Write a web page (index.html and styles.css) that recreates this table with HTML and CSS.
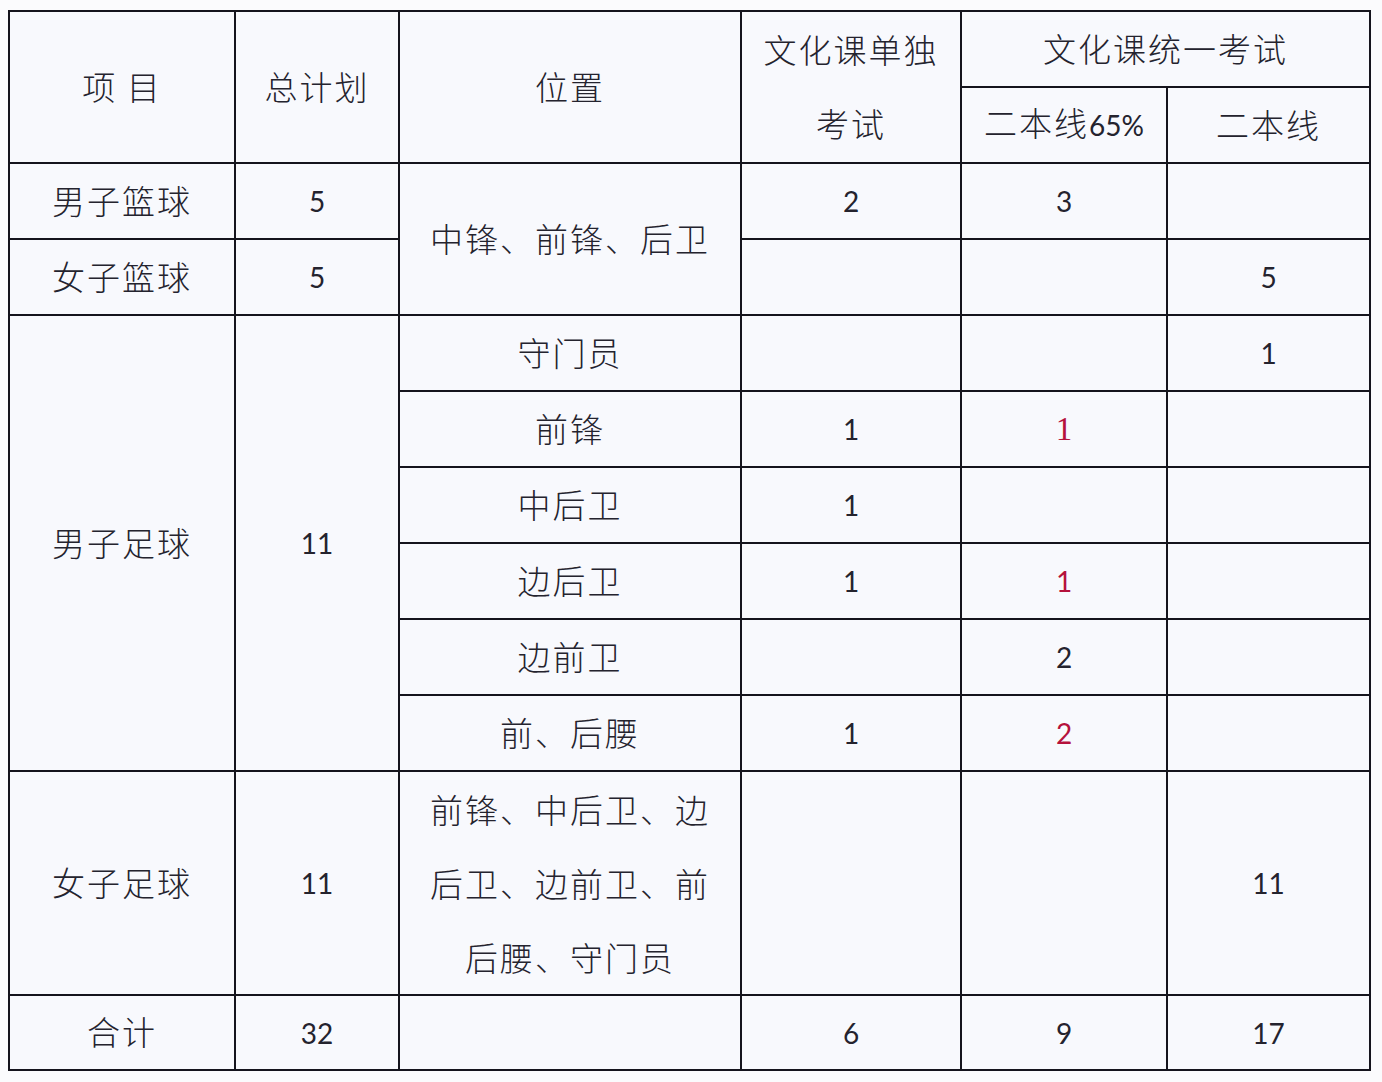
FILE: index.html
```html
<!DOCTYPE html>
<html lang="zh">
<head>
<meta charset="utf-8">
<title>招生计划</title>
<link rel="stylesheet" href="styles.css">
</head>
<body>
<table class="plan">
  <colgroup>
    <col class="c1"><col class="c2"><col class="c3"><col class="c4"><col class="c5"><col class="c6">
  </colgroup>
  <tr class="r">
    <td rowspan="2">项 目</td>
    <td rowspan="2">总计划</td>
    <td rowspan="2">位置</td>
    <td rowspan="2" class="ml">文化课单独<br>考试</td>
    <td colspan="2">文化课统一考试</td>
  </tr>
  <tr class="r">
    <td>二本线<span class="n">65%</span></td>
    <td>二本线</td>
  </tr>
  <tr class="r">
    <td>男子篮球</td>
    <td><span class="n">5</span></td>
    <td rowspan="2">中锋、前锋、后卫</td>
    <td><span class="n">2</span></td>
    <td><span class="n">3</span></td>
    <td></td>
  </tr>
  <tr class="r">
    <td>女子篮球</td>
    <td><span class="n">5</span></td>
    <td></td>
    <td></td>
    <td><span class="n">5</span></td>
  </tr>
  <tr class="r">
    <td rowspan="6">男子足球</td>
    <td rowspan="6"><span class="n">11</span></td>
    <td>守门员</td>
    <td></td>
    <td></td>
    <td><span class="n">1</span></td>
  </tr>
  <tr class="r">
    <td>前锋</td>
    <td><span class="n">1</span></td>
    <td><span class="n red serif">1</span></td>
    <td></td>
  </tr>
  <tr class="r">
    <td>中后卫</td>
    <td><span class="n">1</span></td>
    <td></td>
    <td></td>
  </tr>
  <tr class="r">
    <td>边后卫</td>
    <td><span class="n">1</span></td>
    <td><span class="n red">1</span></td>
    <td></td>
  </tr>
  <tr class="r">
    <td>边前卫</td>
    <td></td>
    <td><span class="n">2</span></td>
    <td></td>
  </tr>
  <tr class="r">
    <td>前、后腰</td>
    <td><span class="n">1</span></td>
    <td><span class="n red">2</span></td>
    <td></td>
  </tr>
  <tr class="rt">
    <td>女子足球</td>
    <td><span class="n">11</span></td>
    <td class="ml tall">前锋、中后卫、边<br>后卫、边前卫、前<br>后腰、守门员</td>
    <td></td>
    <td></td>
    <td><span class="n">11</span></td>
  </tr>
  <tr class="rl">
    <td>合计</td>
    <td><span class="n">32</span></td>
    <td></td>
    <td><span class="n">6</span></td>
    <td><span class="n">9</span></td>
    <td><span class="n">17</span></td>
  </tr>
</table>
</body>
</html>
```

FILE: styles.css
```css
html, body {
  margin: 0;
  padding: 0;
  background: #fbfbfd;
}
body {
  padding: 10px 0 0 8px;
}
.plan {
  border-collapse: collapse;
  table-layout: fixed;
  width: 1361px;
  background: #f8f9fd;
  font-family: "Noto Sans CJK SC", "Noto Sans", sans-serif;
  font-weight: 300;
  font-size: 33px;
  letter-spacing: 2px;
  color: #24232e;
}
.c1 { width: 226px; }
.c2 { width: 164px; }
.c3 { width: 342px; }
.c4 { width: 220px; }
.c5 { width: 206px; }
.c6 { width: 203px; }
.plan td {
  border: 2px solid #15141d;
  padding: 0 0 3px 0;
  text-align: center;
  vertical-align: middle;
  line-height: 40px;
  white-space: nowrap;
}
.plan td.ml {
  line-height: 74px;
  padding-bottom: 2px;
}
.plan td.tall {
  line-height: 74px;
  padding-bottom: 0;
}
.r { height: 76px; }
.rt { height: 224px; }
.rl { height: 75px; }
.n {
  font-family: "Lato", "Open Sans", sans-serif;
  font-weight: 400;
  font-size: 28px;
  letter-spacing: 0;
}
.red {
  color: #b5123c;
}
.serif {
  font-family: "Liberation Serif", serif;
  font-size: 33px;
  font-weight: 300;
}
```
